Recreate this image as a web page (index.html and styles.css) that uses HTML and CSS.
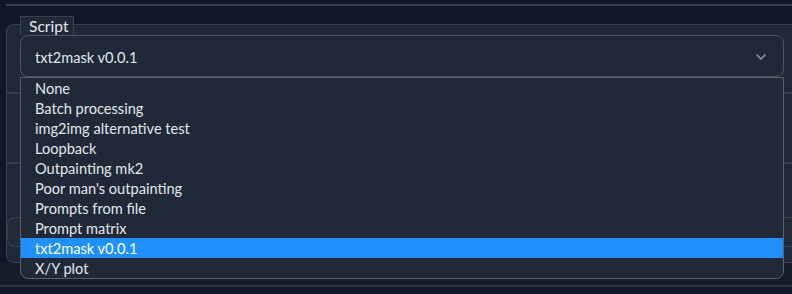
FILE: index.html
```html
<!DOCTYPE html>
<html>
<head>
<meta charset="utf-8">
<link rel="stylesheet" href="styles.css">
</head>
<body>
<div class="topline"></div>
<div class="panel">
  <div class="script-block">
    <div class="tab">Script</div>
    <div class="select-wrap">
      <div class="select">
        <span class="value">txt2mask v0.0.1</span>
        <svg class="chev" width="12" height="8" viewBox="0 0 12 8"><path d="M1.5 1.5 L6 6 L10.5 1.5" fill="none" stroke="#8a919c" stroke-width="1.6"/></svg>
      </div>
      <ul class="menu">
        <li>None</li>
        <li>Batch processing</li>
        <li>img2img alternative test</li>
        <li>Loopback</li>
        <li>Outpainting mk2</li>
        <li>Poor man's outpainting</li>
        <li>Prompts from file</li>
        <li>Prompt matrix</li>
        <li class="sel">txt2mask v0.0.1</li>
        <li>X/Y plot</li>
      </ul>
    </div>
  </div>
  <div class="row r1"></div>
  <div class="row r2"></div>
  <div class="row r3"><div class="box"></div></div>
</div>
<div class="under"></div>
<div class="bottomline"></div>
</body>
</html>
```
FILE: styles.css
```css
html, body {
  margin: 0;
  padding: 0;
}
body {
  background: #111827;
  width: 792px;
  height: 294px;
  overflow: hidden;
  font-family: "Source Sans Pro", Lato, "Noto Sans", sans-serif;
  color: #e5e7eb;
}
.topline {
  margin: 4px 0 0 6px;
  height: 2px;
  background: #374151;
}
.panel {
  margin: 18px 0 0 6px;
  height: 237px;
  border: 1px solid #374151;
  border-right: none;
  border-radius: 8px 0 0 8px;
  background: #1f2937;
  display: flex;
  flex-direction: column;
}
.script-block {
  margin: -9px 8px 0 13px;
  height: 74px;
  display: flex;
  flex-direction: column;
}
.tab {
  align-self: flex-start;
  height: 19px;
  line-height: 19px;
  padding: 0 0 0 8px;
  border: 1px solid #374151;
  border-bottom: none;
  background: #1f2937;
  font-size: 15.6px;
  color: #e5e7eb;
  box-sizing: border-box;
  width: 54px;
}
.select-wrap {
  position: relative;
}
.select {
  height: 42px;
  box-sizing: border-box;
  border: 1px solid #4b5563;
  border-radius: 8px;
  background: #1f2937;
  display: flex;
  align-items: center;
  justify-content: space-between;
  padding: 2px 16px 0 14px;
  font-size: 14.6px;
}
.chev {
  display: block;
  margin-top: -1px;
}
.menu {
  position: absolute;
  left: 0;
  right: 0;
  top: 42px;
  margin: 0;
  padding: 0;
  list-style: none;
  background: #1f2937;
  border: 1px solid #5a616c;
  border-radius: 0 0 8px 8px;
  z-index: 2;
  font-size: 14.6px;
}
.menu li {
  height: 20px;
  line-height: 22px;
  padding-left: 14px;
  color: #e5e7eb;
  overflow: hidden;
}
.menu li.sel {
  background: #1e90ff;
  color: #ffffff;
}
.row {
  border-top: 2px solid #374151;
}
.r1 {
  margin-top: 2px;
  height: 68px;
}
.r2 {
  height: 53px;
}
.r3 {
  border-top: none;
  flex: 1;
  display: flex;
  flex-direction: column;
}
.box {
  height: 28px;
  border: 1px solid #374151;
  border-right: none;
  border-radius: 8px 0 0 8px;
  background: #222b38;
}
.under {
  height: 22px;
  background: #161d2a;
}
.bottomline {
  height: 2px;
  background: #2c3442;
}
```
